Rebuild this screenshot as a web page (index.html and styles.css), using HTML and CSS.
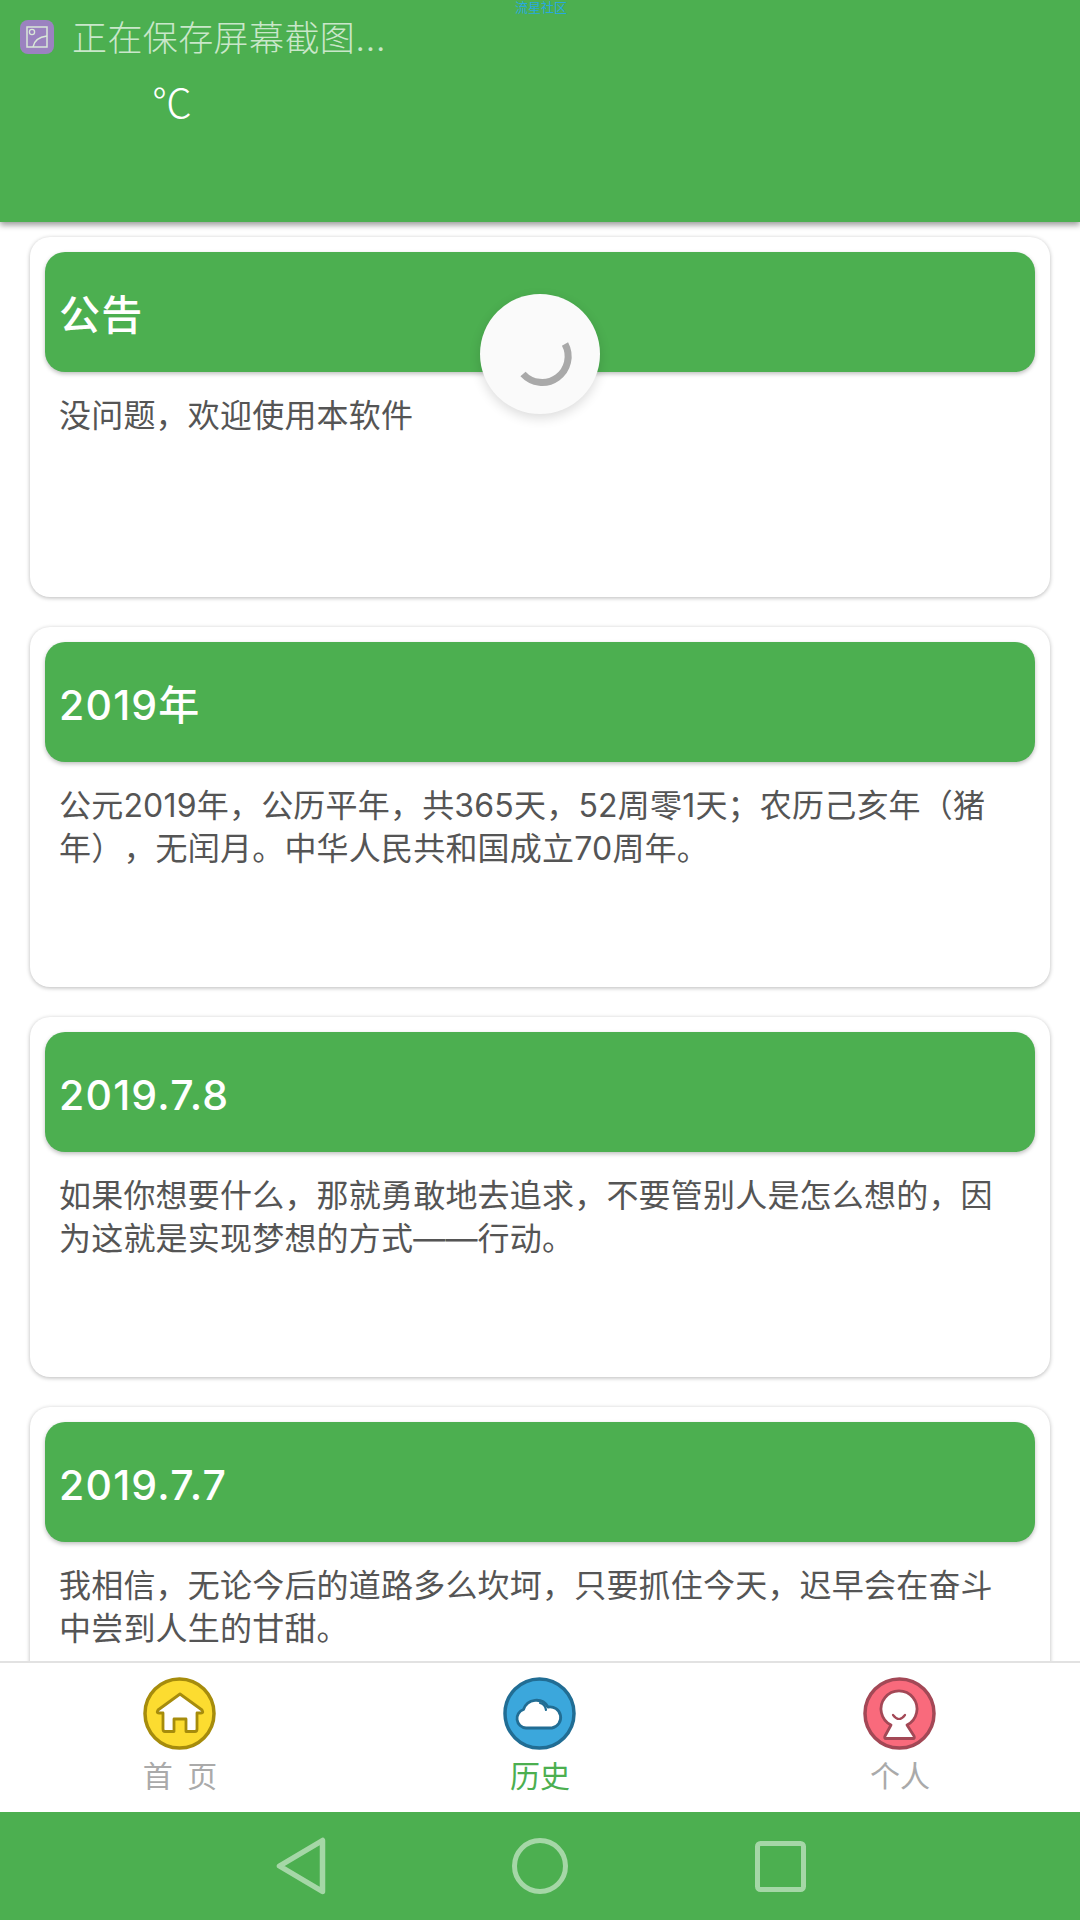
FILE: index.html
```html
<!DOCTYPE html>
<html lang="zh-CN">
<head>
    <meta charset="UTF-8">
    <meta name="viewport" content="width=device-width, initial-scale=1.0">
    <title>历史</title>
    <link rel="stylesheet" href="styles.css">
</head>
<body>
    <div class="page">
        <header class="top">
            <div class="brand">流星社区</div>
            <div class="notice">
                <svg class="notice-icon" viewBox="0 0 34 34">
                    <rect width="34" height="34" rx="8" fill="#9b82c0"/>
                    <rect x="7" y="7" width="20" height="20" fill="none" stroke="#d9e8d8" stroke-width="1.5"/>
                    <circle cx="12" cy="12" r="2.6" fill="none" stroke="#d9e8d8" stroke-width="1.3"/>
                    <path d="M13 27C14 21 19 17 27 16" fill="none" stroke="#d9e8d8" stroke-width="1.5"/>
                </svg>
                <span class="notice-text">正在保存屏幕截图...</span>
            </div>
            <div class="temp">℃</div>
        </header>

        <main class="list">
            <section class="card">
                <h2 class="card-title">公告</h2>
                <p class="card-text">没问题，欢迎使用本软件</p>
            </section>
            <section class="card">
                <h2 class="card-title">2019年</h2>
                <p class="card-text">公元2019年，公历平年，共365天，52周零1天；农历己亥年（猪年），无闰月。中华人民共和国成立70周年。</p>
            </section>
            <section class="card">
                <h2 class="card-title">2019.7.8</h2>
                <p class="card-text">如果你想要什么，那就勇敢地去追求，不要管别人是怎么想的，因为这就是实现梦想的方式——行动。</p>
            </section>
            <section class="card">
                <h2 class="card-title">2019.7.7</h2>
                <p class="card-text">我相信，无论今后的道路多么坎坷，只要抓住今天，迟早会在奋斗中尝到人生的甘甜。</p>
            </section>
        </main>

        <nav class="tabs">
            <div class="tab">
                <svg class="tab-icon" viewBox="0 0 73 73">
                    <circle cx="36.5" cy="36.5" r="34.5" fill="#fcdc30" stroke="#a68c0c" stroke-width="3.5"/>
                    <path d="M37 17L59 33Q61 36 58 36H54V52Q54 54.500 52 54.500H43V42H31V54.500H22Q20 54.500 20 52V36H16Q13 36 15 33Z" fill="#fff" stroke="#a68c0c" stroke-width="2.800" stroke-linejoin="round"/>
                </svg>
                <span class="tab-label">首 页</span>
            </div>
            <div class="tab active">
                <svg class="tab-icon" viewBox="0 0 73 73">
                    <circle cx="36.5" cy="36.5" r="34.5" fill="#3ba7dc" stroke="#216d94" stroke-width="3.500"/>
                    <path d="M23 51A9.500 9.500 0 0 1 20.500 32.500A13.500 13.500 0 0 1 45 30A10.500 10.500 0 0 1 49 51Z" fill="#fff" stroke="#216d94" stroke-width="2.800" stroke-linejoin="round"/>
                    <path d="M37 26Q42 27 43 33" fill="none" stroke="#216d94" stroke-width="2.200" stroke-linecap="round"/>
                </svg>
                <span class="tab-label">历史</span>
            </div>
            <div class="tab">
                <svg class="tab-icon" viewBox="0 0 73 73">
                    <circle cx="36.5" cy="36.5" r="34.5" fill="#f96a7c" stroke="#a34856" stroke-width="3.500"/>
                    <path d="M28 48A18 18 0 1 1 44 48L51 59Q52 61.500 50 61.500H23Q21 61.500 22 59Z" fill="#fff" stroke="#a34856" stroke-width="2.800" stroke-linejoin="round"/>
                    <path d="M30 38Q36 46 42 38" fill="none" stroke="#a34856" stroke-width="2.200" stroke-linecap="round"/>
                </svg>
                <span class="tab-label">个人</span>
            </div>
        </nav>

        <footer class="sysbar">
            <svg class="sys-icon" viewBox="0 0 50 58">
                <path d="M3.500 29L46.500 3.500V54.500Z" fill="none" stroke="#a5d7a7" stroke-width="5.500" stroke-linejoin="round"/>
            </svg>
            <svg class="sys-icon" viewBox="0 0 56 56">
                <circle cx="28" cy="28" r="25.500" fill="none" stroke="#a5d7a7" stroke-width="5"/>
            </svg>
            <svg class="sys-icon" viewBox="0 0 51 51">
                <rect x="2.500" y="2.500" width="46" height="46" rx="3" fill="none" stroke="#a5d7a7" stroke-width="5"/>
            </svg>
        </footer>

        <div class="spinner">
            <svg viewBox="0 0 120 120">
                <path d="M85 50A26 26 0 0 1 43 80" fill="none" stroke="#a9a9a9" stroke-width="7"/>
            </svg>
        </div>
    </div>
</body>
</html>
```

FILE: styles.css
```css
* {
    box-sizing: border-box;
}
body {
    margin: 0;
    font-family: Inter, "Noto Sans CJK SC", "Noto Sans", sans-serif;
    background: #fff;
}
.page {
    position: relative;
    display: flex;
    flex-direction: column;
    width: 1080px;
    height: 1920px;
    overflow: hidden;
}
.top {
    position: relative;
    z-index: 2;
    flex: none;
    height: 222px;
    background: #4caf50;
    box-shadow: 0 3px 6px rgba(0, 0, 0, 0.4);
}
.brand {
    height: 16px;
    padding-left: 515px;
    font-size: 13px;
    line-height: 14px;
    color: #29a8df;
}
.notice {
    display: flex;
    align-items: center;
    gap: 18px;
    height: 44px;
    margin-top: -1px;
    padding-left: 20px;
}
.notice-icon {
    width: 34px;
    height: 34px;
}
.notice-text {
    padding-top: 2px;
    font-size: 35px;
    font-weight: 300;
    line-height: 44px;
    letter-spacing: 0.4px;
    color: #c9e7ca;
}
.temp {
    margin-top: 18px;
    padding-left: 152px;
    font-family: "Noto Sans CJK SC", sans-serif;
    font-size: 40px;
    font-weight: 300;
    line-height: 48px;
    color: #fff;
}
.list {
    flex: 1;
    min-height: 0;
    overflow: hidden;
    display: flex;
    flex-direction: column;
    gap: 30px;
    padding: 15px 30px 0;
}
.card {
    flex: none;
    height: 360px;
    padding: 15px;
    background: #fff;
    border-radius: 20px;
    box-shadow: 0 1px 4px rgba(0, 0, 0, 0.28);
}
.card-title {
    height: 120px;
    margin: 0;
    padding: 0 14px;
    background: #4caf50;
    border-radius: 20px;
    box-shadow: 0 2px 4px rgba(0, 0, 0, 0.25);
    font-size: 41px;
    font-weight: 500;
    line-height: 126px;
    letter-spacing: 1.2px;
    color: #fff;
}
.card-text {
    margin: 0;
    padding: 22px 22px 0 14px;
    font-size: 32px;
    font-weight: 400;
    line-height: 43px;
    letter-spacing: 0.2px;
    text-spacing-trim: space-all;
    color: #555;
}
.tabs {
    position: relative;
    z-index: 1;
    flex: none;
    display: flex;
    height: 151px;
    background: #fff;
    border-top: 2px solid #e2e2e2;
}
.tab {
    flex: 1;
    display: flex;
    flex-direction: column;
    align-items: center;
    padding-top: 14px;
}
.tab-icon {
    width: 73px;
    height: 73px;
    margin-left: -1px;
}
.tab-label {
    margin-top: 4px;
    font-size: 30px;
    font-weight: 400;
    line-height: 44px;
    word-spacing: 6px;
    color: #aaa;
}
.tab.active .tab-label {
    color: #4caf50;
}
.sysbar {
    position: relative;
    z-index: 1;
    flex: none;
    height: 108px;
    display: flex;
    align-items: center;
    background: #4caf50;
    padding-left: 276px;
}
.sys-icon:nth-child(1) {
    width: 50px;
    height: 58px;
}
.sys-icon:nth-child(2) {
    width: 56px;
    height: 56px;
    margin-left: 186px;
}
.sys-icon:nth-child(3) {
    width: 51px;
    height: 51px;
    margin-left: 187px;
}
.spinner {
    position: absolute;
    left: 480px;
    top: 294px;
    z-index: 3;
    width: 120px;
    height: 120px;
    border-radius: 50%;
    background: #fafafa;
    box-shadow: 0 4px 12px rgba(0, 0, 0, 0.14);
}
.spinner svg {
    display: block;
    width: 120px;
    height: 120px;
}
```
